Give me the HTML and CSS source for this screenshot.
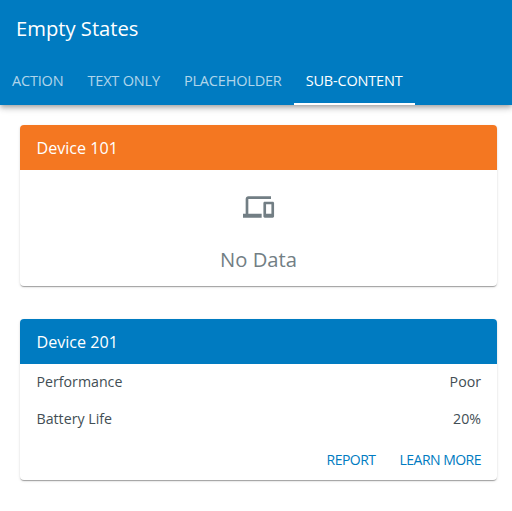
FILE: index.html
```html
<!DOCTYPE html>
<html lang="en">
<head>
<meta charset="utf-8">
<title>Empty States</title>
<link rel="stylesheet" href="styles.css">
</head>
<body>
<header class="appbar">
  <h1 class="title">Empty States</h1>
  <nav class="tabs">
    <a class="tab">ACTION</a>
    <a class="tab">TEXT ONLY</a>
    <a class="tab">PLACEHOLDER</a>
    <a class="tab active">SUB-CONTENT</a>
  </nav>
</header>
<main class="content">
  <section class="card">
    <h2 class="card-title orange">Device 101</h2>
    <div class="empty">
      <svg class="icon" viewBox="0 0 24 24"><path d="M4 6h17V4H4c-1.100 0-2 .9-2 2v11H0v3h14v-3H4V6zm18.300 2h-6c-.55 0-1 .45-1 1v10c0 .55.45 1 1 1h6c.55 0 1-.45 1-1V9c0-.55-.45-1-1-1zm-1 9h-4v-7h4v7z"/></svg>
      <p class="empty-title">No Data</p>
    </div>
  </section>
  <section class="card">
    <h2 class="card-title">Device 201</h2>
    <div class="row"><span>Performance</span><span>Poor</span></div>
    <div class="row"><span>Battery Life</span><span>20%</span></div>
    <div class="actions"><a>REPORT</a><a>LEARN MORE</a></div>
  </section>
</main>
</body>
</html>
```
FILE: styles.css
```css
* { box-sizing: border-box; }
body { margin: 0; min-height: 100vh; background: #fff; color: #424e54; font-family: "Open Sans", sans-serif; overflow: hidden; }
h1, h2, p { margin: 0; }
.appbar { height: 105px; background: #007bc1; color: #fff; box-shadow: 0 2px 4px -1px rgba(0,0,0,.2), 0 4px 5px rgba(0,0,0,.14), 0 1px 10px rgba(0,0,0,.12); }
.title { height: 57px; padding-left: 16px; font-size: 20.2px; font-weight: 400; line-height: 57px; }
.tabs { display: flex; height: 48px; }
.tab { padding: 0 12px; font-size: 14.5px; line-height: 48px; letter-spacing: -.18px; color: rgba(255,255,255,.7); }
.tab.active { color: #fff; border-bottom: 2px solid #fff; }
.content { display: flex; flex-direction: column; gap: 33px; padding: 20px 15px 0 20px; }
.card { height: 161px; border-radius: 4px; background: #fff; box-shadow: 0 2px 1px -1px rgba(0,0,0,.2), 0 1px 1px rgba(0,0,0,.14), 0 1px 3px rgba(0,0,0,.12); }
.card-title { height: 45px; padding-left: 16.5px; border-radius: 4px 4px 0 0; background: #007bc1; color: #fff; font-size: 16.1px; font-weight: 400; line-height: 46px; }
.orange { background: #f47721; }
.empty { display: flex; flex-direction: column; align-items: center; padding-top: 21px; color: #727e84; }
.icon { width: 32px; height: 32px; fill: currentColor; }
.empty-title { margin-top: 21px; font-size: 20.2px; line-height: 30px; }
.row { display: flex; justify-content: space-between; height: 36.5px; padding: 0 16px 0 16.5px; font-size: 14.2px; line-height: 36.5px; }
.actions { display: flex; justify-content: flex-end; gap: 24px; padding-right: 16px; color: #007bc1; font-size: 14px; letter-spacing: -.52px; line-height: 45px; }
```
